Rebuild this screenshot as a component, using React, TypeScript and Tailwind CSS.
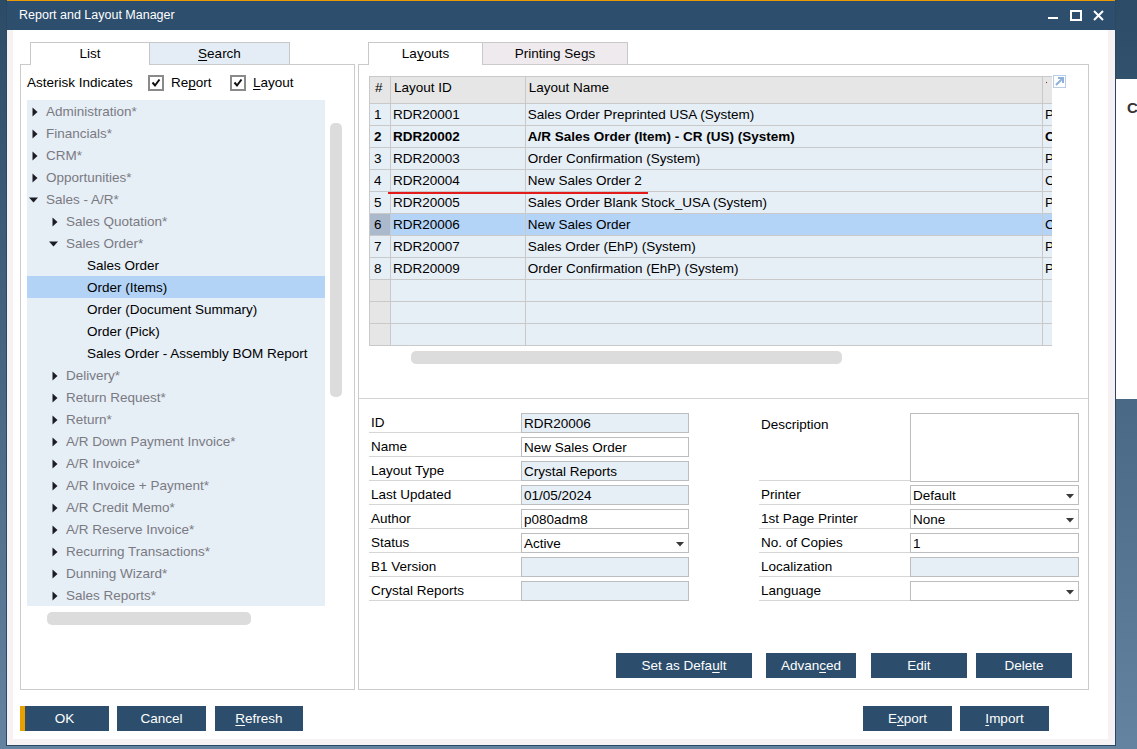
import React from 'react';

type TNode = { label: string; level: 0 | 1 | 2; state: 'closed' | 'open' | 'leaf'; selected?: boolean };

const tree: TNode[] = [
  { label: 'Administration*', level: 0, state: 'closed' },
  { label: 'Financials*', level: 0, state: 'closed' },
  { label: 'CRM*', level: 0, state: 'closed' },
  { label: 'Opportunities*', level: 0, state: 'closed' },
  { label: 'Sales - A/R*', level: 0, state: 'open' },
  { label: 'Sales Quotation*', level: 1, state: 'closed' },
  { label: 'Sales Order*', level: 1, state: 'open' },
  { label: 'Sales Order', level: 2, state: 'leaf' },
  { label: 'Order (Items)', level: 2, state: 'leaf', selected: true },
  { label: 'Order (Document Summary)', level: 2, state: 'leaf' },
  { label: 'Order (Pick)', level: 2, state: 'leaf' },
  { label: 'Sales Order - Assembly BOM Report', level: 2, state: 'leaf' },
  { label: 'Delivery*', level: 1, state: 'closed' },
  { label: 'Return Request*', level: 1, state: 'closed' },
  { label: 'Return*', level: 1, state: 'closed' },
  { label: 'A/R Down Payment Invoice*', level: 1, state: 'closed' },
  { label: 'A/R Invoice*', level: 1, state: 'closed' },
  { label: 'A/R Invoice + Payment*', level: 1, state: 'closed' },
  { label: 'A/R Credit Memo*', level: 1, state: 'closed' },
  { label: 'A/R Reserve Invoice*', level: 1, state: 'closed' },
  { label: 'Recurring Transactions*', level: 1, state: 'closed' },
  { label: 'Dunning Wizard*', level: 1, state: 'closed' },
  { label: 'Sales Reports*', level: 1, state: 'closed' },
];

type GRow = { n: string; id: string; name: string; last: string; bold?: boolean; sel?: boolean };
const rows: GRow[] = [
  { n: '1', id: 'RDR20001', name: 'Sales Order Preprinted USA (System)', last: 'P' },
  { n: '2', id: 'RDR20002', name: 'A/R Sales Order (Item) - CR (US) (System)', last: 'C', bold: true },
  { n: '3', id: 'RDR20003', name: 'Order Confirmation (System)', last: 'P' },
  { n: '4', id: 'RDR20004', name: 'New Sales Order 2', last: 'C' },
  { n: '5', id: 'RDR20005', name: 'Sales Order Blank Stock_USA (System)', last: 'P' },
  { n: '6', id: 'RDR20006', name: 'New Sales Order', last: 'C', sel: true },
  { n: '7', id: 'RDR20007', name: 'Sales Order (EhP) (System)', last: 'P' },
  { n: '8', id: 'RDR20009', name: 'Order Confirmation (EhP) (System)', last: 'P' },
];

function TriRight() {
  return (
    <svg width="6" height="10" viewBox="0 0 6 10" className="ml-[3px]">
      <path d="M0.5 0.5 L5.5 5 L0.5 9.5Z" fill="#1c1c24" />
    </svg>
  );
}
function TriDown() {
  return (
    <svg width="9" height="6" viewBox="0 0 9 6">
      <path d="M0 0.5 H9 L4.5 5.5Z" fill="#1c1c24" />
    </svg>
  );
}

function Check() {
  return (
    <svg width="16" height="16" viewBox="0 0 16 16" className="shrink-0">
      <rect x="1" y="1" width="14" height="14" fill="#fff" stroke="#8a8a8a" strokeWidth="2" />
      <path d="M4.5 7.5 L7 10.5 L11.5 4.5" fill="none" stroke="#111" strokeWidth="2" />
    </svg>
  );
}

function DropArrow() {
  return (
    <svg width="8" height="5" viewBox="0 0 8 5" className="absolute right-[4px] top-[8px]">
      <path d="M0 0 H8 L4 4.5Z" fill="#3a3a3a" />
    </svg>
  );
}

function Field({ value = '', ro, drop, w }: { value?: string; ro?: boolean; drop?: boolean; w: string }) {
  return (
    <div
      className={`${w} relative h-[20px] border border-[#bdbdbd] ${ro ? 'bg-[#e6eef6]' : 'bg-white'} pl-[2px] leading-[19px] text-[13.5px] text-black`}
    >
      {value}
      {drop && <DropArrow />}
    </div>
  );
}

function Btn({ label, w, ok }: { label: React.ReactNode; w: string; ok?: boolean }) {
  return (
    <div
      className={`${w} relative h-[25px] bg-[#2c4e6c] text-white text-[13.5px] flex items-center justify-center pt-[1px]`}
    >
      {ok && <div className="absolute left-0 top-0 bottom-0 w-[5px] bg-[#e8a000]" />}
      {label}
    </div>
  );
}

const U = ({ c }: { c: string }) => <span className="underline underline-offset-2">{c}</span>;

export default function App() {
  return (
    <div className="relative w-[1137px] h-[749px] overflow-hidden bg-gradient-to-b from-[#2c4b67] to-[#6383a0] font-['Liberation_Sans',Arial,sans-serif]">
      {/* window behind on the right */}
      <div className="absolute left-[1116px] top-[79px] w-[40px] h-[320px] bg-white">
        <div className="mt-[18px] ml-[11px] text-[15px] font-bold text-[#333]">C</div>
      </div>

      {/* main window */}
      <div className="absolute left-[6px] top-0 w-[1110px] h-[746px] bg-[#f6f1f3] border-x border-b border-[#2a4863] flex flex-col">
        <div className="h-px bg-[#e89a00]" />
        <div className="h-[29px] bg-[#2d4e6c] flex items-center pl-[12px] relative">
          <span className="text-white text-[12.5px]">Report and Layout Manager</span>
          <div className="absolute left-[1041px] top-[16px] w-[10px] h-[2px] bg-white" />
          <div className="absolute left-[1063px] top-[9px] w-[12px] h-[11px] border-2 border-white" />
          <svg className="absolute left-[1086px] top-[9px]" width="11" height="11" viewBox="0 0 11 11">
            <path d="M1 1 L10 10 M10 1 L1 10" stroke="#fff" strokeWidth="2" />
          </svg>
        </div>

        <div className="flex-1 pl-[6px] pr-[7px] pb-[6px] flex">
          <div className="flex-1 bg-white flex flex-col pl-[7px] pt-[12px]">
            <div className="flex gap-[3px]">
              {/* LEFT COLUMN */}
              <div className="w-[335px] flex flex-col">
                <div className="h-[22px] flex items-start pl-[10px] relative z-10">
                  <div className="w-[120px] h-[23px] bg-white border border-b-0 border-[#c8c8c8] flex items-center justify-center pt-[1px] text-[13.5px] text-black">
                    List
                  </div>
                  <div className="w-[140px] h-[22px] bg-[#e4edf5] border border-l-0 border-b-0 border-[#c8c8c8] flex items-center justify-center pt-[1px] text-[13.5px] text-black">
                    <span>
                      <U c="S" />
                      earch
                    </span>
                  </div>
                </div>
                <div className="h-[626px] border border-[#cbcbcb] flex flex-col">
                  <div className="flex items-center h-[16px] mt-[10px] pl-[6px] text-[13.5px] text-black">
                    <span className="w-[121px] pt-[1px]">Asterisk Indicates</span>
                    <Check />
                    <span className="ml-[7px] w-[59px] pt-[1px]">
                      Re<U c="p" />ort
                    </span>
                    <Check />
                    <span className="ml-[7px] pt-[1px]">
                      <U c="L" />ayout
                    </span>
                  </div>
                  <div className="flex mt-[9px] ml-[6px]">
                    <div className="w-[298px] bg-[#e6eef6]">
                      {tree.map((t, i) => (
                        <div
                          key={i}
                          className={`h-[22px] flex items-center pt-[2px] text-[13.5px] ${t.selected ? 'bg-[#b3d3f6]' : ''} ${
                            t.state === 'leaf' ? 'text-black' : 'text-[#7a7a82]'
                          } ${t.level === 0 ? 'pl-[2px]' : t.level === 1 ? 'pl-[22px]' : 'pl-[60px]'}`}
                        >
                          {t.state !== 'leaf' && (
                            <div className="w-[17px] flex items-center">
                              {t.state === 'closed' ? <TriRight /> : <TriDown />}
                            </div>
                          )}
                          <span>{t.label}</span>
                        </div>
                      ))}
                    </div>
                    <div className="ml-[5px] mt-[23px] w-[12px] h-[274px] rounded-[5px] bg-[#dcdcdc]" />
                  </div>
                  <div className="ml-[26px] mt-[6px] w-[204px] h-[13px] rounded-[5px] bg-[#dcdcdc]" />
                </div>
              </div>

              {/* RIGHT COLUMN */}
              <div className="w-[731px] flex flex-col">
                <div className="h-[22px] flex items-start pl-[10px] relative z-10">
                  <div className="w-[115px] h-[23px] bg-white border border-b-0 border-[#c8c8c8] flex items-center justify-center pt-[1px] text-[13.5px] text-black">
                    <span>
                      La<U c="y" />outs
                    </span>
                  </div>
                  <div className="w-[145px] h-[22px] bg-[#efeaed] border border-l-0 border-b-0 border-[#c8c8c8] flex items-center justify-center pt-[1px] text-[13.5px] text-black">
                    <span>
                      Printing Se<U c="g" />s
                    </span>
                  </div>
                </div>
                <div className="h-[626px] border border-[#cbcbcb] flex flex-col">
                  <div className="h-[334px] border-b border-[#d4d4d4] pt-[11px] pl-[10px]">
                    <div className="flex items-start">
                      <div className="relative w-[683px] border-l border-t border-[#c9c9c9] text-[13.5px] text-black overflow-hidden">
                        <div className="flex h-[27px] bg-[#e6e6e6] border-b border-[#c9c9c9]">
                          <div className="w-[21px] border-r border-[#c9c9c9] flex items-center pb-[3px] pl-[5px]">#</div>
                          <div className="w-[135px] border-r border-[#c9c9c9] flex items-center pb-[3px] pl-[3px]">Layout ID</div>
                          <div className="w-[518px] border-r border-[#c9c9c9] flex items-center pb-[3px] pl-[3px]">Layout Name</div>
                          <div className="w-[9px] relative">
                            <div className="absolute left-[3px] top-[5px] w-px h-px bg-[#8a1a1a]" />
                          </div>
                        </div>
                        {rows.map((r) => (
                          <div
                            key={r.n}
                            className={`flex h-[22px] border-b border-[#c9c9c9] ${r.sel ? 'bg-[#b3d3f7]' : 'bg-[#e6eef6]'} ${
                              r.bold ? 'font-bold' : ''
                            }`}
                          >
                            <div
                              className={`w-[21px] border-r border-[#c9c9c9] flex items-center pt-[2px] pl-[4px] ${
                                r.sel ? 'bg-[#aab9cc]' : ''
                              }`}
                            >
                              {r.n}
                            </div>
                            <div className="w-[135px] border-r border-[#c9c9c9] flex items-center pt-[2px] pl-[2px]">{r.id}</div>
                            <div className="w-[518px] border-r border-[#c9c9c9] flex items-center pt-[2px] pl-[2px] whitespace-nowrap">
                              {r.name}
                            </div>
                            <div className="w-[9px] flex items-center pt-[2px] pl-[2px] overflow-hidden">{r.last}</div>
                          </div>
                        ))}
                        {[0, 1, 2].map((k) => (
                          <div key={k} className="flex h-[22px] border-b border-[#c9c9c9] bg-[#e6eef6]">
                            <div className="w-[21px] border-r border-[#c9c9c9] bg-[#e6e6e6]" />
                            <div className="w-[135px] border-r border-[#c9c9c9]" />
                            <div className="w-[518px] border-r border-[#c9c9c9]" />
                            <div className="w-[9px]" />
                          </div>
                        ))}
                        <div className="absolute left-[18px] top-[115px] w-[260px] h-[2px] bg-[#e31b1b]" />
                      </div>
                      <svg width="13" height="13" viewBox="0 0 13 13" className="ml-[1px] -mt-[1px]">
                        <rect x="0.5" y="0.5" width="12" height="12" fill="#fff" stroke="#b9cde6" />
                        <path d="M3 10 L10 3 M5 3 H10 V8" fill="none" stroke="#8fb0da" strokeWidth="2" />
                      </svg>
                    </div>
                    <div className="ml-[42px] mt-[5px] w-[431px] h-[13px] rounded-[5px] bg-[#dcdcdc]" />
                  </div>

                  <div className="flex pt-[14px] pl-[10px] text-[13.5px] text-black">
                    <div className="flex flex-col gap-[4px]">
                      {[
                        { l: 'ID', v: 'RDR20006', ro: true },
                        { l: 'Name', v: 'New Sales Order' },
                        { l: 'Layout Type', v: 'Crystal Reports', ro: true },
                        { l: 'Last Updated', v: '01/05/2024', ro: true },
                        { l: 'Author', v: 'p080adm8' },
                        { l: 'Status', v: 'Active', drop: true },
                        { l: 'B1 Version', v: '', ro: true },
                        { l: 'Crystal Reports', v: '', ro: true },
                      ].map((f) => (
                        <div key={f.l} className="flex h-[20px]">
                          <div className="w-[152px] border-b border-[#d6d6d6] pl-[2px] leading-[20px]">{f.l}</div>
                          <Field w="w-[168px]" value={f.v} ro={f.ro} drop={f.drop} />
                        </div>
                      ))}
                    </div>
                    <div className="ml-[70px] flex flex-col gap-[4px]">
                      <div className="flex h-[68px]">
                        <div className="w-[151px] border-b border-[#d6d6d6] pl-[2px] pt-[2px]">Description</div>
                        <div className="w-[169px] h-[69px] border border-[#bdbdbd] bg-white" />
                      </div>
                      {[
                        { l: 'Printer', v: 'Default', drop: true },
                        { l: '1st Page Printer', v: 'None', drop: true },
                        { l: 'No. of Copies', v: '1' },
                        { l: 'Localization', v: '', ro: true },
                        { l: 'Language', v: '', drop: true },
                      ].map((f) => (
                        <div key={f.l} className="flex h-[20px]">
                          <div className="w-[151px] border-b border-[#d6d6d6] pl-[2px] leading-[20px]">{f.l}</div>
                          <Field w="w-[169px]" value={f.v} ro={f.ro} drop={f.drop} />
                        </div>
                      ))}
                    </div>
                  </div>

                  <div className="mt-auto pb-[11px] flex justify-end pr-[16px]">
                    <Btn
                      w="w-[136px]"
                      label={
                        <span>
                          Set as Defa<U c="u" />lt
                        </span>
                      }
                    />
                    <div className="w-[14px]" />
                    <Btn
                      w="w-[90px]"
                      label={
                        <span>
                          Advan<U c="c" />ed
                        </span>
                      }
                    />
                    <div className="w-[15px]" />
                    <Btn w="w-[96px]" label="Edit" />
                    <div className="w-[9px]" />
                    <Btn w="w-[96px]" label="Delete" />
                  </div>
                </div>
              </div>
            </div>

            {/* bottom buttons */}
            <div className="mt-[16px] flex">
              <Btn w="w-[89px]" label="OK" ok />
              <div className="w-[8px]" />
              <Btn w="w-[89px]" label="Cancel" />
              <div className="w-[9px]" />
              <Btn
                w="w-[88px]"
                label={
                  <span>
                    <U c="R" />efresh
                  </span>
                }
              />
              <div className="flex-1" />
              <Btn
                w="w-[89px]"
                label={
                  <span>
                    E<U c="x" />port
                  </span>
                }
              />
              <div className="w-[8px]" />
              <Btn
                w="w-[89px]"
                label={
                  <span>
                    <U c="I" />mport
                  </span>
                }
              />
              <div className="w-[59px]" />
            </div>
          </div>
        </div>
      </div>
    </div>
  );
}
